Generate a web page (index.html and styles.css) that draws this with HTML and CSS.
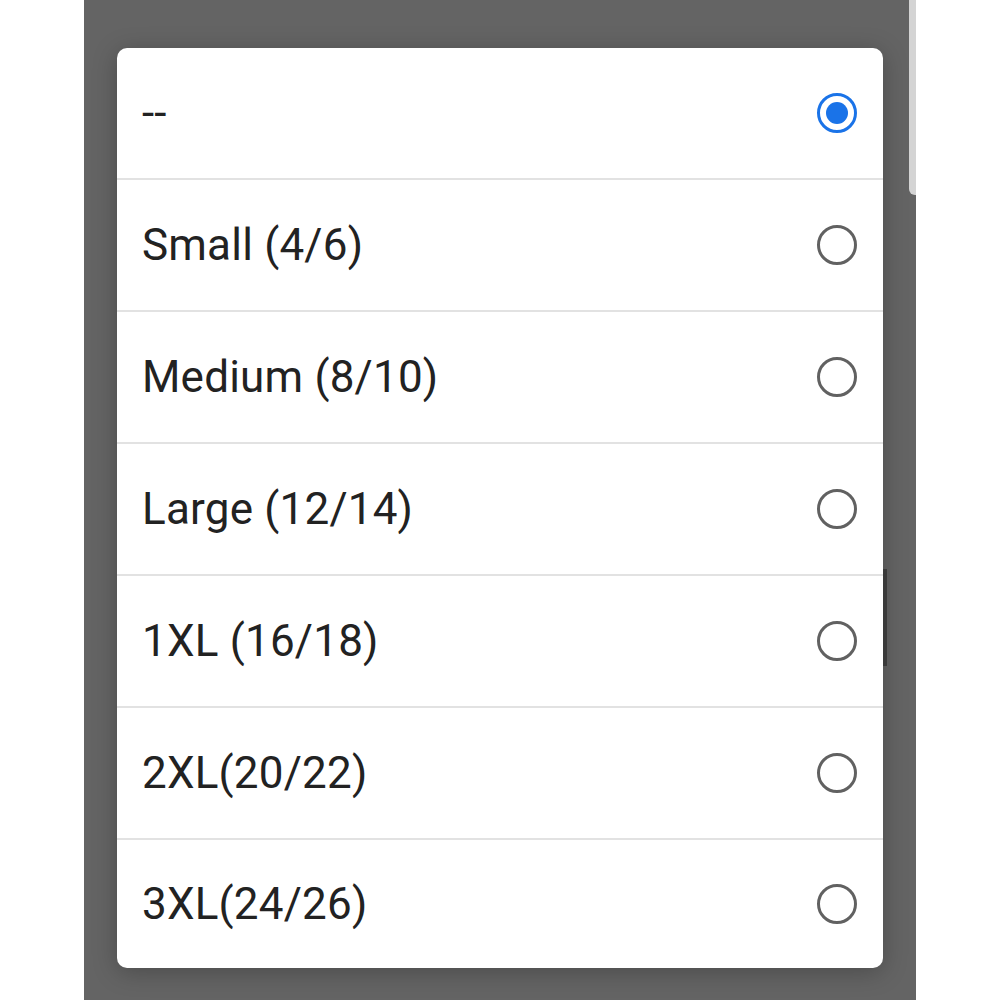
FILE: index.html
```html
<!DOCTYPE html>
<html lang="en">
<head>
    <meta charset="UTF-8">
    <meta name="viewport" content="width=device-width, initial-scale=1.0">
    <title>Size picker</title>
    <link rel="stylesheet" href="styles.css">
</head>
<body>
    <div class="backdrop">
        <div class="page-scroll"></div>
        <div class="inner-scroll"></div>
        <ul class="dialog">
            <li class="option"><span class="label">--</span><span class="radio checked"></span></li>
            <li class="option"><span class="label">Small (4/6)</span><span class="radio"></span></li>
            <li class="option"><span class="label">Medium (8/10)</span><span class="radio"></span></li>
            <li class="option"><span class="label">Large (12/14)</span><span class="radio"></span></li>
            <li class="option"><span class="label">1XL (16/18)</span><span class="radio"></span></li>
            <li class="option"><span class="label">2XL(20/22)</span><span class="radio"></span></li>
            <li class="option"><span class="label">3XL(24/26)</span><span class="radio"></span></li>
        </ul>
    </div>
</body>
</html>
```

FILE: styles.css
```css
body {
    margin: 0;
    background-color: #ffffff;
    font-family: Roboto, 'Noto Sans', sans-serif;
}

.backdrop {
    position: relative;
    margin: 0 84px;
    height: 1000px;
    padding-top: 48px;
    box-sizing: border-box;
    background-color: #646464;
}

/* scrollbar of the page behind the dialog */
.page-scroll {
    position: absolute;
    top: 0;
    right: 0;
    width: 7px;
    height: 195px;
    background-color: #d4d4d4;
    border-radius: 0 0 0 6px;
}

.inner-scroll {
    position: absolute;
    top: 569px;
    left: 799px;
    width: 4px;
    height: 97px;
    background-color: #3a3a3a;
}

.dialog {
    list-style: none;
    margin: 0 0 0 33px;
    padding: 0;
    width: 766px;
    background-color: #ffffff;
    border-radius: 10px;
    box-shadow: 0 4px 24px rgba(0, 0, 0, 0.25);
    overflow: hidden;
}

.option {
    display: flex;
    align-items: center;
    justify-content: space-between;
    height: 130px;
    padding: 0 26px 0 25px;
    border-bottom: 2px solid #e2e2e2;
}

.option:last-child {
    height: 128px;
    border-bottom: none;
}

.label {
    font-size: 44px;
    color: #222222;
    letter-spacing: 0.2px;
}

.radio {
    position: relative;
    width: 34px;
    height: 34px;
    border: 3px solid #616161;
    border-radius: 50%;
}

.radio.checked {
    border-color: #1a73e8;
}

.radio.checked::after {
    content: '';
    position: absolute;
    top: 6px;
    left: 6px;
    width: 22px;
    height: 22px;
    border-radius: 50%;
    background-color: #1a73e8;
}
```
